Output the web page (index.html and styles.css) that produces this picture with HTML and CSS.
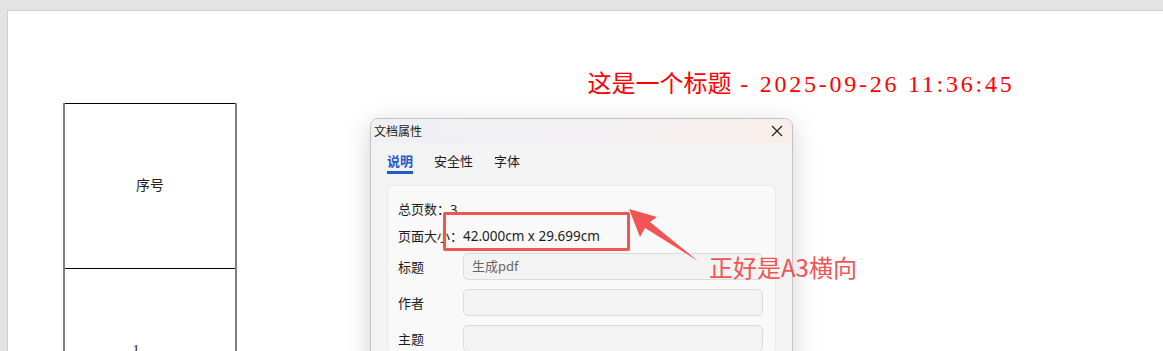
FILE: index.html
```html
<!DOCTYPE html>
<html lang="zh-CN">
<head>
  <meta charset="UTF-8" />
  <title>文档属性</title>
  <link rel="stylesheet" href="styles.css">
</head>
<body>

  <div class="page">
    <h1 class="doc-title">这是一个标题<span class="stamp"> - 2025-09-26 11:36:45</span></h1>
    <table class="grid">
      <tr><td>序号</td></tr>
      <tr><td class="num">1</td></tr>
    </table>
  </div>

  <!-- properties dialog -->
  <div class="dialog">
    <div class="titlebar">
      <span>文档属性</span>
      <svg class="close" width="12" height="12" viewBox="0 0 12 12">
        <path d="M1 1 L11 11 M11 1 L1 11" stroke="#1f1f1f" stroke-width="1.2" fill="none" />
      </svg>
    </div>
    <div class="tabs">
      <span class="tab active">说明</span>
      <span class="tab">安全性</span>
      <span class="tab">字体</span>
    </div>
    <div class="card">
      <div class="info">总页数：3</div>
      <div class="info">页面大小：<span class="val">42.000cm x 29.699cm</span></div>
      <div class="field">
        <label>标题</label>
        <div class="input">生成pdf</div>
      </div>
      <div class="field">
        <label>作者</label>
        <div class="input"></div>
      </div>
      <div class="field">
        <label>主题</label>
        <div class="input"></div>
      </div>
    </div>
  </div>

  <!-- annotation -->
  <div class="mark-box"></div>
  <svg class="mark-arrow" width="80" height="60" viewBox="625 205 80 60">
    <polygon points="629,209 657,217 650,222 698,261 645,228 640,237" fill="#f25454" />
  </svg>
  <div class="mark-text">正好是A3横向</div>

</body>
</html>
```

FILE: styles.css
```css
/* Base */
body {
  margin: 0;
  background: #e3e3e3;
  overflow: hidden;
  height: 351px;
  font-family: "Noto Sans", "Noto Sans CJK SC", sans-serif;
}

/* Printed page */
.page {
  width: 1587px;
  height: 600px;
  margin: 10px 0 0 7px;
  background: #fff;
  border-top: 1px solid #cfcfcf;
  border-left: 1px solid #cfcfcf;
  box-sizing: border-box;
  padding-top: 58px;
}
.doc-title {
  margin: 0;
  text-align: center;
  font-weight: 400;
  font-size: 24px;
  line-height: 30px;
  color: #ff0000;
  font-family: "Liberation Serif", "Noto Sans CJK SC", serif;
}
.stamp {
  letter-spacing: 2.75px;
}
.grid {
  margin: 4px 0 0 55px;
  border-collapse: collapse;
  font-family: "Liberation Serif", "Noto Sans CJK SC", serif;
  font-size: 14px;
  color: #222;
}
.grid td {
  width: 170px;
  height: 160px;
  padding: 0 0 4px;
  text-align: center;
  border-top: 1px solid #000;
  border-bottom: 1px solid #000;
  border-left: 2px solid #808080;
  border-right: 2px solid #808080;
}
.grid td.num {
  padding: 0 28px 0 0;
  width: 142px;
  height: 164px;
}

/* Dialog */
.dialog {
  position: absolute;
  left: 370px;
  top: 118px;
  width: 423px;
  height: 260px;
  box-sizing: border-box;
  background: #f3f3f3;
  border: 1px solid #c4c4c4;
  border-radius: 8px;
  box-shadow: 0 6px 26px rgba(0, 0, 0, 0.18);
  overflow: hidden;
  color: #1c1c1c;
}
.titlebar {
  height: 24px;
  display: flex;
  align-items: center;
  justify-content: space-between;
  padding: 0 9px 0 3px;
  font-size: 12px;
  background: linear-gradient(90deg, #eff0f4, #f3f0f2 60%, #f9eeea);
}
.tabs {
  display: flex;
  gap: 21px;
  padding: 9px 0 0 16px;
  font-size: 13px;
  height: 30px;
  box-sizing: border-box;
}
.tab {
  line-height: 18px;
}
.tab.active {
  color: #1f5bc4;
  font-weight: 700;
  border-bottom: 3px solid #1f5bc4;
  height: 18px;
  padding-bottom: 1px;
}
.card {
  margin: 12px 16px 0 16px;
  background: #f9f9f9;
  border: 1px solid #e9e9e9;
  border-radius: 6px;
  padding: 10px 12px 0 10px;
  font-size: 13px;
}
.info {
  height: 27px;
  line-height: 27px;
}
.val {
  font-size: 13.5px;
}
.field {
  display: flex;
  align-items: center;
  margin-top: 3px;
}
.field + .field {
  margin-top: 9px;
}
.field label {
  width: 65px;
  flex: none;
}
.input {
  flex: 1;
  height: 27px;
  box-sizing: border-box;
  border: 1px solid #dcdcdc;
  border-radius: 5px;
  background: #f3f3f3;
  padding: 0 8px;
  line-height: 25px;
  color: #666;
}

/* Annotation */
.mark-box {
  position: absolute;
  left: 443px;
  top: 212px;
  width: 187px;
  height: 39px;
  box-sizing: border-box;
  border: 3px solid #f25454;
  border-radius: 2px;
}
.mark-arrow {
  position: absolute;
  left: 625px;
  top: 205px;
}
.mark-text {
  position: absolute;
  left: 709px;
  top: 251px;
  font-size: 24px;
  line-height: 32px;
  color: #f25454;
  font-family: "Noto Sans CJK SC", sans-serif;
}
```
